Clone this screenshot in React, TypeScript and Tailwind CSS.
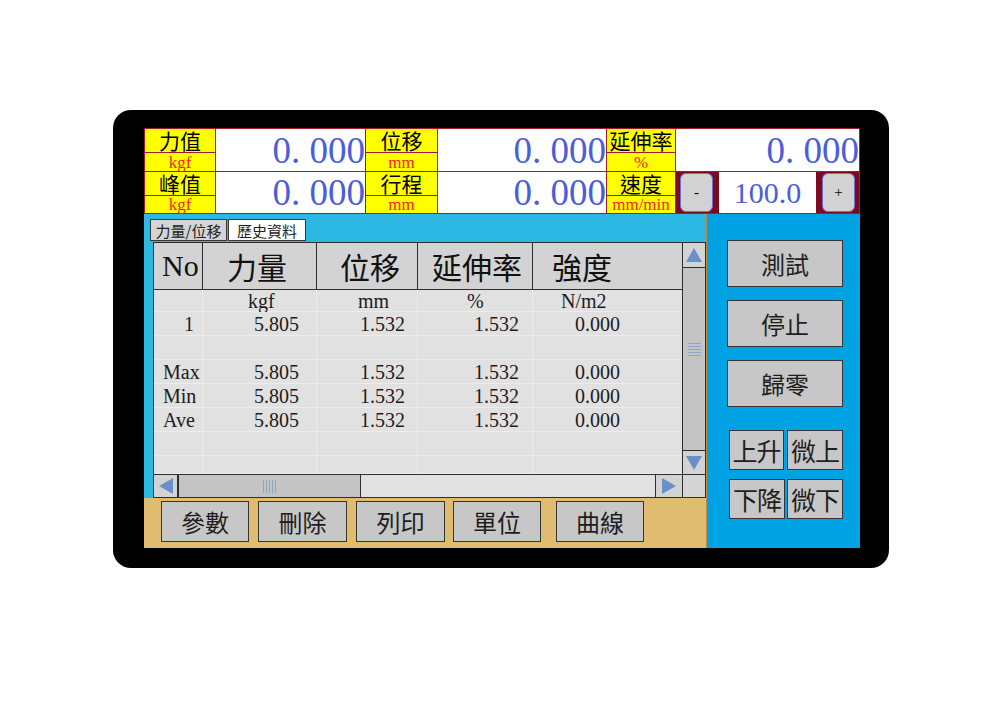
const serif = "font-['Liberation_Serif','Noto_Sans_CJK_TC',serif]";
const cjk = "font-['Noto_Sans_CJK_TC','Liberation_Sans',sans-serif]";

function Label({ name, unit, unitH }: { name: string; unit: string; unitH: string }) {
  return (
    <div className="flex flex-col bg-[#ffff00]">
      <div className={`flex flex-1 items-center justify-center text-[21px] leading-none text-black ${cjk}`}>
        {name}
      </div>
      <div
        className={`${unitH} flex items-center justify-center border-t border-[#a31c2a] text-[17px] leading-none text-[#f21c1c] ${serif}`}
      >
        {unit}
      </div>
    </div>
  );
}

function Value({ v }: { v: string }) {
  return (
    <div className={`flex items-center justify-end bg-white text-[37px] leading-none text-[#4b5ed8] ${serif}`}>
      {v}
    </div>
  );
}

function SpinBtn({ t }: { t: string }) {
  return (
    <div
      className={`flex w-[33px] items-center justify-center rounded-[6px] border border-[#6f6fd8] bg-[#d2d2d2] text-[15px] leading-none text-black ${serif}`}
    >
      {t}
    </div>
  );
}

function Tri({ dir }: { dir: "up" | "down" | "left" | "right" }) {
  const pts = {
    up: "9,1 17,15 1,15",
    down: "1,1 17,1 9,15",
    left: "15,1 15,17 1,9",
    right: "1,1 1,17 15,9",
  }[dir];
  const vertical = dir === "up" || dir === "down";
  return (
    <svg width={vertical ? 18 : 16} height={vertical ? 16 : 18} viewBox={vertical ? "0 0 18 16" : "0 0 16 18"}>
      <polygon points={pts} fill="#6b8fc8" />
    </svg>
  );
}

const cols = ["w-[49px]", "w-[114px]", "w-[101px]", "w-[115px]", "w-[149px]"];
const heads = [
  { t: "No", cls: `pl-[8px] ${serif}` },
  { t: "力量", cls: `pl-[24px] ${cjk}` },
  { t: "位移", cls: `pl-[23px] ${cjk}` },
  { t: "延伸率", cls: `pl-[14px] ${cjk}` },
  { t: "強度", cls: `pl-[19px] ${cjk}` },
];
const unitPad = ["", "pl-[45px]", "pl-[41px]", "pl-[49px]", "pl-[28px]"];
const valPad = ["pr-[8px]", "pr-[17px]", "pr-[12px]", "pr-[13px]", "pr-[62px]"];

type Row = { cells: string[]; kind: "unit" | "num" | "stat" | "empty"; h: string };
const rows: Row[] = [
  { cells: ["", "kgf", "mm", "%", "N/m2"], kind: "unit", h: "h-[22px]" },
  { cells: ["1", "5.805", "1.532", "1.532", "0.000"], kind: "num", h: "h-[24px]" },
  { cells: ["", "", "", "", ""], kind: "empty", h: "h-[24px]" },
  { cells: ["Max", "5.805", "1.532", "1.532", "0.000"], kind: "stat", h: "h-[24px]" },
  { cells: ["Min", "5.805", "1.532", "1.532", "0.000"], kind: "stat", h: "h-[24px]" },
  { cells: ["Ave", "5.805", "1.532", "1.532", "0.000"], kind: "stat", h: "h-[24px]" },
  { cells: ["", "", "", "", ""], kind: "empty", h: "h-[24px]" },
  { cells: ["", "", "", "", ""], kind: "empty", h: "h-[18px]" },
];

function cellClass(kind: Row["kind"], i: number) {
  if (kind === "unit") return `justify-start ${unitPad[i]}`;
  if (kind === "stat" && i === 0) return "justify-start pl-[9px]";
  return `justify-end ${valPad[i]}`;
}

function GrayBtn({ t, cls }: { t: string; cls: string }) {
  return (
    <div
      className={`${cls} flex items-center justify-center border border-[#353535] bg-[#c7c7c7] leading-none text-[#1e1e1e] ${cjk}`}
    >
      {t}
    </div>
  );
}

export default function App() {
  return (
    <div className="h-[727px] w-[1000px] bg-white pl-[113px] pt-[110px]">
      <div className="h-[458px] w-[776px] rounded-[18px] bg-black pl-[31px] pt-[18px]">
        <div className="flex h-[420px] w-[716px] flex-col">
          {/* readouts */}
          <div className="grid h-[86px] grid-cols-[70px_149px_71px_168px_68px_183px] grid-rows-[42px_41px] gap-px bg-[#a31c2a] p-px">
            <Label name="力值" unit="kgf" unitH="h-[19px]" />
            <Value v="0. 000" />
            <Label name="位移" unit="mm" unitH="h-[19px]" />
            <Value v="0. 000" />
            <Label name="延伸率" unit="%" unitH="h-[19px]" />
            <Value v="0. 000" />

            <Label name="峰值" unit="kgf" unitH="h-[18px]" />
            <Value v="0. 000" />
            <Label name="行程" unit="mm" unitH="h-[18px]" />
            <Value v="0. 000" />
            <Label name="速度" unit="mm/min" unitH="h-[18px]" />
            <div className="flex items-stretch gap-[6px] bg-[#7d0a1e] px-[4px] py-px">
              <SpinBtn t="-" />
              <div
                className={`-my-px flex w-[97px] items-center justify-center bg-white text-[30px] leading-none text-[#4b5ed8] ${serif}`}
              >
                100.0
              </div>
              <SpinBtn t="+" />
            </div>
          </div>

          {/* main */}
          <div className="flex h-[334px]">
            <div className="flex w-[562px] flex-col bg-[#2db8e3]">
              <div className="flex h-[28px] pl-[6px] pt-[5px]">
                <div
                  className={`flex h-[22px] w-[77px] items-center justify-center border border-[#3a3a3a] bg-[#d4d4d4] text-[15px] leading-none text-[#222] ${cjk}`}
                >
                  力量/位移
                </div>
                <div
                  className={`ml-px flex h-[22px] w-[78px] items-center justify-center border border-[#3a3a3a] bg-white text-[15px] leading-none text-[#222] ${cjk}`}
                >
                  歷史資料
                </div>
              </div>

              <div className="ml-[9px] flex h-[256px] flex-col border-l border-t border-[#2e2e2e]">
                <div className="flex h-[231px]">
                  <div className="flex w-[528px] flex-col">
                    <div className="flex h-[47px] border-b border-[#2e2e2e] bg-[#d3d3d3]">
                      {heads.map((h, i) => (
                        <div
                          key={h.t}
                          className={`${cols[i]} ${h.cls} flex items-center text-[30px] leading-none text-[#111] ${
                            i < 4 ? "border-r border-[#2e2e2e]" : ""
                          }`}
                        >
                          {h.t}
                        </div>
                      ))}
                    </div>
                    {rows.map((r, ri) => (
                      <div key={ri} className={`${r.h} flex border-b border-[#ececec] bg-[#e1e1e1]`}>
                        {r.cells.map((c, i) => (
                          <div
                            key={i}
                            className={`${cols[i]} ${cellClass(r.kind, i)} flex items-center text-[20px] leading-none text-[#1c1c1c] ${serif} ${
                              i < 4 ? "border-r border-[#ececec]" : ""
                            }`}
                          >
                            {c}
                          </div>
                        ))}
                      </div>
                    ))}
                  </div>
                  <div className="flex w-[24px] flex-col border-x border-[#2e2e2e]">
                    <div className="flex h-[25px] items-center justify-center border-b border-[#2e2e2e] bg-[#d3d3d3]">
                      <Tri dir="up" />
                    </div>
                    <div className="flex flex-1 items-center justify-center bg-[#c4c4c4] pb-[20px]">
                      <div className="flex w-[13px] flex-col gap-[2px]">
                        <div className="h-px bg-[#8ea4c8]" />
                        <div className="h-px bg-[#8ea4c8]" />
                        <div className="h-px bg-[#8ea4c8]" />
                        <div className="h-px bg-[#8ea4c8]" />
                        <div className="h-px bg-[#8ea4c8]" />
                      </div>
                    </div>
                    <div className="flex h-[24px] items-center justify-center border-t border-[#2e2e2e] bg-[#d3d3d3]">
                      <Tri dir="down" />
                    </div>
                  </div>
                </div>
                <div className="flex h-[24px] border-y border-[#2e2e2e]">
                  <div className="flex w-[23px] items-center justify-center bg-[#d3d3d3]">
                    <Tri dir="left" />
                  </div>
                  <div className="flex w-[184px] items-center justify-center gap-[2px] border-l-2 border-r border-[#2e2e2e] bg-[#c4c4c4]">
                    <div className="h-[13px] w-px bg-[#8ea4c8]" />
                    <div className="h-[13px] w-px bg-[#8ea4c8]" />
                    <div className="h-[13px] w-px bg-[#8ea4c8]" />
                    <div className="h-[13px] w-px bg-[#8ea4c8]" />
                    <div className="h-[13px] w-px bg-[#8ea4c8]" />
                  </div>
                  <div className="flex-1 bg-[#e1e1e1]" />
                  <div className="flex w-[27px] items-center justify-center border-l border-[#2e2e2e] bg-[#d3d3d3]">
                    <Tri dir="right" />
                  </div>
                  <div className="w-[24px] border-x border-[#2e2e2e] bg-[#d5d5d5]" />
                </div>
              </div>

              <div className="flex h-[50px] items-start bg-[#dfbc6f] pl-[17px] pt-[3px]">
                <GrayBtn t="參數" cls="h-[41px] w-[88px] text-[24px]" />
                <GrayBtn t="刪除" cls="ml-[9px] h-[41px] w-[89px] text-[24px]" />
                <GrayBtn t="列印" cls="ml-[9px] h-[41px] w-[89px] text-[24px]" />
                <GrayBtn t="單位" cls="ml-[8px] h-[41px] w-[88px] text-[24px]" />
                <GrayBtn t="曲線" cls="ml-[15px] h-[41px] w-[88px] text-[24px]" />
              </div>
            </div>

            <div className="flex flex-1 flex-col border-l border-[#c8863a] bg-[#00a2e4] pl-[20px] pt-[26px]">
              <GrayBtn t="測試" cls="h-[47px] w-[116px] text-[24px]" />
              <GrayBtn t="停止" cls="mt-[13px] h-[47px] w-[116px] text-[24px]" />
              <GrayBtn t="歸零" cls="mt-[13px] h-[47px] w-[116px] text-[24px]" />
              <div className="mt-[23px] flex gap-[3px] pl-[2px]">
                <GrayBtn t="上升" cls="h-[40px] w-[55px] text-[25px] tracking-[-1px]" />
                <GrayBtn t="微上" cls="h-[40px] w-[56px] text-[25px] tracking-[-1px]" />
              </div>
              <div className="mt-[9px] flex gap-[2px] pl-[2px]">
                <GrayBtn t="下降" cls="h-[40px] w-[56px] text-[25px] tracking-[-1px]" />
                <GrayBtn t="微下" cls="h-[40px] w-[56px] text-[25px] tracking-[-1px]" />
              </div>
            </div>
          </div>
        </div>
      </div>
    </div>
  );
}
